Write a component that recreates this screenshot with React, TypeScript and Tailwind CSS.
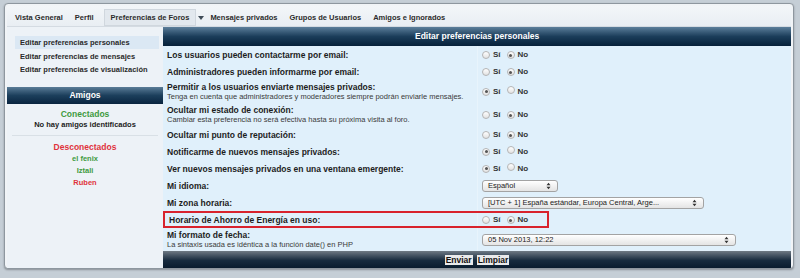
const FONT = { fontFamily: '"Liberation Sans", Arial, sans-serif' };

function Radio({ checked }: { checked?: boolean }) {
  return (
    <span className="inline-flex h-[8px] w-[8px] items-center justify-center rounded-full border border-[#b4b4b4] bg-gradient-to-b from-white to-[#e2e2e2]">
      {checked && <span className="h-[3px] w-[3px] rounded-full bg-[#555]" />}
    </span>
  );
}

function YesNo({ yes }: { yes: boolean }) {
  return (
    <div className="flex items-center text-[8px] font-bold text-[#333]">
      <Radio checked={yes} />
      <span className="ml-[3px]">Sí</span>
      <span className="ml-[6px]">
        <Radio checked={!yes} />
      </span>
      <span className="ml-[3px]">No</span>
    </div>
  );
}

function Select({ value, width }: { value: string; width: string }) {
  return (
    <div
      className={`flex h-[12px] items-center justify-between rounded-[3px] border border-[#a3a3a3] bg-gradient-to-b from-white to-[#e4e4e4] pl-[5px] pr-[6px] text-[7.5px] text-[#222] ${width}`}
    >
      <span>{value}</span>
      <svg width="5" height="8" viewBox="0 0 5 8">
        <path d="M0.5 3.2 L2.5 0.8 L4.5 3.2Z M0.5 4.8 L2.5 7.2 L4.5 4.8Z" fill="#333" />
      </svg>
    </div>
  );
}

type Row = {
  label: string;
  sub?: string;
  yes?: boolean;
  select?: { value: string; width: string };
  mark?: boolean;
};

const rows: Row[] = [
  { label: "Los usuarios pueden contactarme por email:", yes: false },
  { label: "Administradores pueden informarme por email:", yes: false },
  {
    label: "Permitir a los usuarios enviarte mensajes privados:",
    sub: "Tenga en cuenta que administradores y moderadores siempre podrán enviarle mensajes.",
    yes: true,
  },
  {
    label: "Ocultar mi estado de conexión:",
    sub: "Cambiar esta preferencia no será efectiva hasta su próxima visita al foro.",
    yes: false,
  },
  { label: "Ocultar mi punto de reputación:", yes: false },
  { label: "Notificarme de nuevos mensajes privados:", yes: true },
  { label: "Ver nuevos mensajes privados en una ventana emergente:", yes: true },
  { label: "Mi idioma:", select: { value: "Español", width: "w-[76px]" } },
  {
    label: "Mi zona horaria:",
    select: { value: "[UTC + 1] España estándar, Europa Central, Arge...", width: "w-[222px]" },
  },
  { label: "Horario de Ahorro de Energía en uso:", yes: false, mark: true },
  {
    label: "Mi formato de fecha:",
    sub: "La sintaxis usada es idéntica a la función date() en PHP",
    select: { value: "05 Nov 2013, 12:22", width: "w-[254px]" },
  },
];

const tabs = ["Vista General", "Perfil", "Preferencias de Foros", "Mensajes privados", "Grupos de Usuarios", "Amigos e Ignorados"];

export default function App() {
  return (
    <div className="h-[278px] w-[800px] overflow-hidden bg-[#c5ced6] pl-[4px] pr-[6px] pt-[3px]" style={FONT}>
      <div className="flex h-[266px] flex-col overflow-hidden rounded-[4px] border border-[#8e979f] bg-[#f1f4f7] p-[2px] shadow-[0_1px_2px_rgba(0,0,0,0.3)]">
        {/* tabs */}
        <div className="flex h-[21px] items-center border-b border-[#d4dbe2] bg-gradient-to-b from-[#f3f6f9] to-[#e9eef3] pl-[2px] pt-[3px] text-[7.5px] font-bold text-[#2b2b2b]">
          {tabs.map((t) => (
            <div key={t} className="flex items-center">
              <div
                className={`flex h-[17px] items-center px-[6px] ${
                  t === "Preferencias de Foros" ? "ml-[4px] border border-[#d0d7de] bg-[#e2e8ee]" : ""
                }`}
              >
                {t}
              </div>
              {t === "Preferencias de Foros" && (
                <svg className="ml-[2px]" width="6" height="4" viewBox="0 0 6 4">
                  <path d="M0 0 L6 0 L3 4Z" fill="#3f4b57" />
                </svg>
              )}
            </div>
          ))}
        </div>

        <div className="flex flex-1">
          {/* sidebar */}
          <div className="flex w-[156px] shrink-0 flex-col bg-[#edf2f7] pt-[9px]">
            <div className="flex flex-col gap-[3px] pl-[8px] pr-[4px] text-[7.5px] font-bold text-[#2a2a2a]">
              <div className="flex h-[13px] items-center bg-[#dbe8f4] pl-[5px]">Editar preferencias personales</div>
              <div className="flex h-[10px] items-center pl-[5px]">Editar preferencias de mensajes</div>
              <div className="flex h-[10px] items-center pl-[5px]">Editar preferencias de visualización</div>
            </div>
            <div className="mt-[12px] flex h-[17px] items-center justify-center bg-gradient-to-b from-[#5a7c97] via-[#1c3f5c] to-[#0a2540] text-[8.5px] font-bold text-white">
              Amigos
            </div>
            <div className="flex flex-col items-center pt-[4px] text-[7.5px] font-bold">
              <div className="text-[8.5px] leading-[12px] text-[#3e9a3e]">Conectados</div>
              <div className="leading-[10px] text-[#222]">No hay amigos identificados</div>
              <div className="my-[5px] h-px w-[146px] bg-[#d9e0e6]" />
              <div className="text-[8.5px] leading-[12px] text-[#e0323c]">Desconectados</div>
              <div className="leading-[12px] text-[#3e9a3e]">el fenix</div>
              <div className="leading-[12px] text-[#3e9a3e]">Iztali</div>
              <div className="leading-[11px] text-[#e0323c]">Ruben</div>
            </div>
          </div>

          {/* main */}
          <div className="flex min-w-0 flex-1 flex-col bg-[#e0f0fb]">
            <div className="flex h-[19px] items-center bg-gradient-to-b from-[#5c7f9b] via-[#1b3d5a] to-[#07213a] pl-[252px] text-[8.5px] font-bold text-white">
              Editar preferencias personales
            </div>
            {rows.map((r) => (
              <div key={r.label} className={`flex items-center ${r.sub ? "h-[23px]" : "h-[17px]"}`}>
                <div
                  className={`flex h-full w-[314px] shrink-0 flex-col justify-center pl-[4px] ${
                    r.mark ? "border-y-2 border-l-2 border-[#d8232d]" : ""
                  }`}
                >
                  <div className="whitespace-nowrap text-[8.5px] font-bold leading-[10px] text-[#1d1d1d]">{r.label}</div>
                  {r.sub && <div className="whitespace-nowrap text-[7.5px] leading-[10px] text-[#3a3a3a]">{r.sub}</div>}
                </div>
                <div className="flex h-full flex-1 items-center border-l border-[#e8f4fc] pl-[4px]">
                  {r.mark ? (
                    <div className="-ml-[5px] flex h-full w-[72px] items-center border-y-2 border-r-2 border-[#d8232d] pl-[5px]">
                      <YesNo yes={false} />
                    </div>
                  ) : r.select ? (
                    <Select value={r.select.value} width={r.select.width} />
                  ) : (
                    <YesNo yes={!!r.yes} />
                  )}
                </div>
              </div>
            ))}
            <div className="mt-auto flex h-[19px] items-start justify-center gap-[4px] bg-gradient-to-b from-[#6f7a84] via-[#172b3e] to-[#07182a] pt-[4px]">
              <span className="bg-[#e9eaeb] px-[1px] text-[8.5px] font-bold leading-[10px] text-[#111]">Enviar</span>
              <span className="bg-[#e9eaeb] px-[1px] text-[8.5px] font-bold leading-[10px] text-[#111]">Limpiar</span>
            </div>
          </div>
        </div>
      </div>
    </div>
  );
}
